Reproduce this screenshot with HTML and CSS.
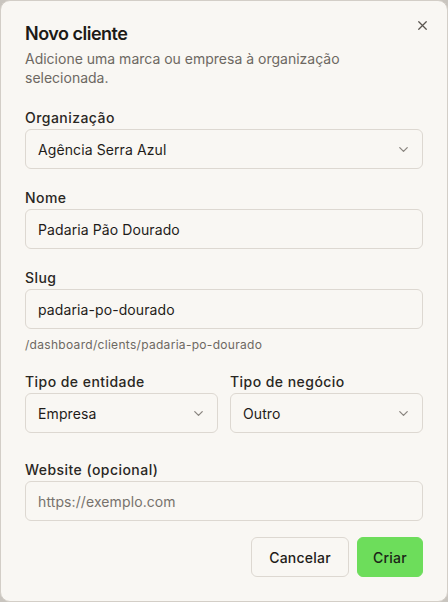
FILE: index.html
```html
<!DOCTYPE html>
<html lang="pt">
<head>
<meta charset="utf-8">
<title>Novo cliente</title>
<link rel="stylesheet" href="styles.css">
</head>
<body>
<div class="dialog">
  <button class="close" aria-label="Fechar">
    <svg width="16" height="16" viewBox="0 0 24 24" fill="none" stroke="currentColor" stroke-width="2" stroke-linecap="round"><path d="M18 6 6 18M6 6l12 12"/></svg>
  </button>
  <div class="header">
    <h2 class="title">Novo cliente</h2>
    <p class="desc">Adicione uma marca ou empresa à organização selecionada.</p>
  </div>
  <div class="form">
    <div class="field">
      <label class="label">Organização</label>
      <div class="control select">
        <span>Agência Serra Azul</span>
        <svg class="chev" width="16" height="16" viewBox="0 0 24 24" fill="none" stroke="currentColor" stroke-width="2" stroke-linecap="round" stroke-linejoin="round"><path d="m6 9 6 6 6-6"/></svg>
      </div>
    </div>
    <div class="field">
      <label class="label">Nome</label>
      <div class="control">Padaria Pão Dourado</div>
    </div>
    <div class="field">
      <label class="label">Slug</label>
      <div class="control">padaria-po-dourado</div>
      <p class="hint">/dashboard/clients/padaria-po-dourado</p>
    </div>
    <div class="row">
      <div class="field">
        <label class="label">Tipo de entidade</label>
        <div class="control select">
          <span>Empresa</span>
          <svg class="chev" width="16" height="16" viewBox="0 0 24 24" fill="none" stroke="currentColor" stroke-width="2" stroke-linecap="round" stroke-linejoin="round"><path d="m6 9 6 6 6-6"/></svg>
        </div>
      </div>
      <div class="field">
        <label class="label">Tipo de negócio</label>
        <div class="control select">
          <span>Outro</span>
          <svg class="chev" width="16" height="16" viewBox="0 0 24 24" fill="none" stroke="currentColor" stroke-width="2" stroke-linecap="round" stroke-linejoin="round"><path d="m6 9 6 6 6-6"/></svg>
        </div>
      </div>
    </div>
    <div class="field website">
      <label class="label">Website (opcional)</label>
      <div class="control placeholder">https://exemplo.com</div>
    </div>
  </div>
  <div class="footer">
    <button class="btn outline">Cancelar</button>
    <button class="btn primary">Criar</button>
  </div>
</div>
</body>
</html>
```
FILE: styles.css
```css
* { box-sizing: border-box; }
html, body { margin: 0; padding: 0; }
body {
  background: #c9c5bf;
  font-family: Inter, "Noto Sans", sans-serif;
  color: #1f1c19;
}
.dialog {
  position: relative;
  width: 448px;
  height: 602px;
  background: #f9f7f3;
  border: 1px solid #d3cec7;
  border-radius: 10px;
  padding: 24px;
  display: flex;
  flex-direction: column;
}
.close {
  position: absolute;
  top: 17px;
  right: 17px;
  border: 0;
  background: none;
  padding: 0;
  width: 15px;
  height: 15px;
  color: #5a554f;
  display: flex;
}
.close svg { width: 15px; height: 15px; }
.header { display: flex; flex-direction: column; gap: 6px; }
.title {
  margin: 0;
  font-size: 18px;
  line-height: 18px;
  font-weight: 600;
  letter-spacing: -0.5px;
  color: #1c1a17;
}
.desc {
  margin: 0;
  font-size: 14px;
  line-height: 19px;
  color: #6d6862;
  padding-right: 30px;
}
.form {
  margin-top: 21px;
  display: flex;
  flex-direction: column;
  gap: 19px;
}
.field { display: flex; flex-direction: column; gap: 1px; min-width: 0; }
.label {
  font-size: 14px;
  line-height: 20px;
  font-weight: 500;
  letter-spacing: 0.45px;
  color: #2a2723;
}
.control {
  height: 40px;
  border: 1px solid #ddd8d1;
  border-radius: 6px;
  background: #f9f7f3;
  padding: 0 12px;
  display: flex;
  align-items: center;
  font-size: 14px;
  letter-spacing: 0.1px;
  color: #1f1c19;
}
.select { justify-content: space-between; }
.chev { color: #8a857f; flex: none; margin-right: -1px; width: 15px; height: 15px; }
.placeholder { color: #77726c; }
.hint {
  margin: 7px 0 0;
  font-size: 12px;
  line-height: 16px;
  letter-spacing: 0.3px;
  color: #6d6862;
}
.row {
  display: grid;
  grid-template-columns: 1fr 1fr;
  gap: 12px;
}
.website { margin-top: 8px; }
.footer {
  margin-top: 16px;
  display: flex;
  justify-content: flex-end;
  gap: 8px;
}
.btn {
  height: 40px;
  border-radius: 6px;
  font-family: inherit;
  font-size: 14px;
  font-weight: 500;
  letter-spacing: 0.25px;
  padding: 0 17px;
  color: #1f1c19;
}
.outline {
  background: #f9f7f3;
  border: 1px solid #ddd8d1;
}
.primary {
  padding: 0 15px;
  background: #6ddd5b;
  border: 1px solid #6ddd5b;
  color: #1b2417;
}
```
